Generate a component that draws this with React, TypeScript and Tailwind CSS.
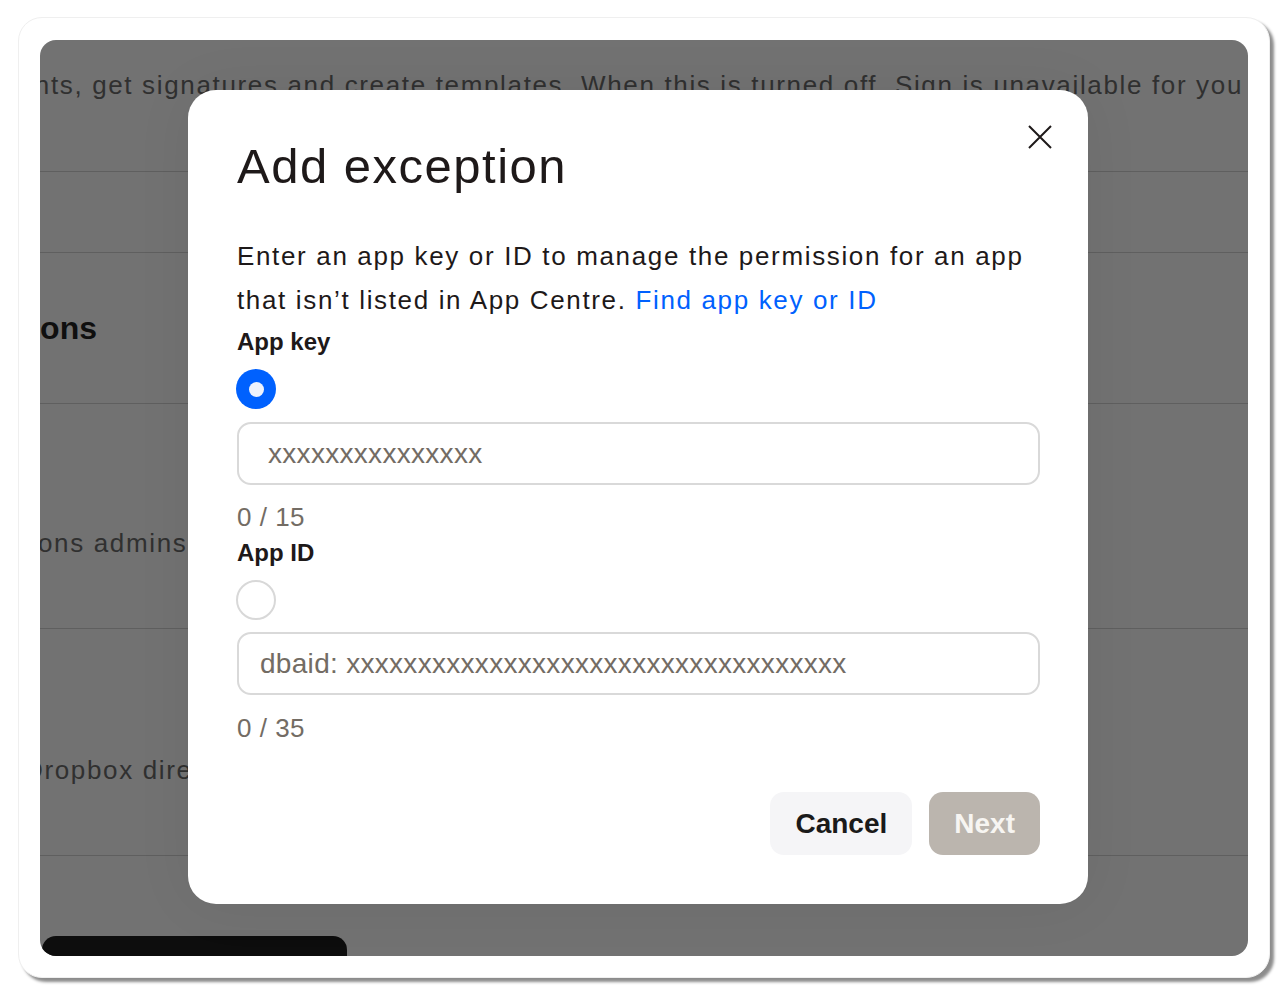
import React from 'react';

const Radio: React.FC<{ checked?: boolean }> = ({ checked }) =>
  checked ? (
    <div className="-ml-[1px] w-10 h-10 rounded-full bg-[#0061fe] flex items-center justify-center">
      <div className="w-[15px] h-[15px] rounded-full bg-[#eef3fd]"></div>
    </div>
  ) : (
    <div className="-ml-[1px] w-10 h-10 rounded-full border-2 border-[#d8d8d8] bg-white"></div>
  );

const Field: React.FC<{ placeholder: string; pad: string }> = ({ placeholder, pad }) => (
  <div className="h-[63px] rounded-[14px] border-2 border-[#d9d9d9] flex items-center">
    <input
      readOnly
      placeholder={placeholder}
      className={`w-full h-full bg-transparent outline-none text-[28px] tracking-[0.3px] text-[#1e1919] placeholder:text-[#736c64] ${pad}`}
    />
  </div>
);

export default function App() {
  return (
    <div className="w-[1288px] h-[996px] bg-white pl-[18px] pt-[17px] font-['Liberation_Sans',Arial,sans-serif]">
      <div className="w-[1252px] h-[961px] rounded-[24px] bg-white border border-[#efefef] shadow-[4px_4px_3px_rgba(0,0,0,0.45)] px-[21px] pt-[22px] pb-[21px]">
        <div className="relative h-full rounded-[16px] bg-[#727272] overflow-hidden flex flex-col">
          {/* page behind the dialog */}
          <div className="h-[33px] shrink-0"></div>
          <div className="h-[99px] shrink-0 border-b border-[#5f5f5f] flex justify-end pr-[5px]">
            <span className="shrink-0 whitespace-nowrap text-[26px] leading-[24px] tracking-[1.65px] text-[#303030]">
              Create documents, get signatures and create templates. When this is turned off, Sign is unavailable for you
            </span>
          </div>
          <div className="h-[81px] shrink-0 border-b border-[#5f5f5f]"></div>
          <div className="h-[151px] shrink-0 border-b border-[#5f5f5f] pt-[55px] flex">
            <div className="w-[57px] shrink-0 flex justify-end">
              <span className="shrink-0 whitespace-nowrap text-[32px] leading-[40px] font-bold text-[#0f0f0f]">Permissions</span>
            </div>
          </div>
          <div className="h-[225px] shrink-0 border-b border-[#5f5f5f] pt-[124px]">
            <p className="-ml-[2px] whitespace-nowrap text-[26px] leading-[30px] tracking-[1.65px] text-[#303030]">
              ons admins can manage which apps are allowed
            </p>
          </div>
          <div className="h-[227px] shrink-0 border-b border-[#5f5f5f] pt-[126px]">
            <p className="-ml-[16px] whitespace-nowrap text-[26px] leading-[30px] tracking-[1.65px] text-[#303030]">
              Dropbox directory
            </p>
          </div>
          <div className="flex-1 flex items-end pl-[2px]">
            <div className="w-[305px] h-[20px] rounded-t-[14px] bg-[#0d0d0d]"></div>
          </div>

          {/* dialog */}
          <div className="absolute left-[148px] top-[50px] w-[900px] h-[814px] rounded-[28px] bg-white shadow-[0_0_60px_rgba(0,0,0,0.06)] pl-[49px] pr-[48px] pt-[46px] flex flex-col text-[#1e1919]">
            <button className="absolute top-[35px] right-[36px] w-6 h-6">
              <svg width="24" height="24" viewBox="0 0 24 24" fill="none">
                <path d="M1 1L23 23M23 1L1 23" stroke="#1e1919" strokeWidth="2" />
              </svg>
            </button>

            <h2 className="text-[49px] leading-[60px] tracking-[1.5px]">Add exception</h2>

            <p className="mt-[38px] text-[26px] leading-[44px] tracking-[1.65px]">
              Enter an app key or ID to manage the permission for an app that isn’t listed in App Centre.{' '}
              <a className="text-[#0061fe]">Find app key or ID</a>
            </p>

            <div className="text-[24px] leading-[40px] font-bold">App key</div>
            <div className="mt-[7px]">
              <Radio checked />
            </div>
            <div className="mt-[13px]">
              <Field placeholder="xxxxxxxxxxxxxxx" pad="pl-[29px]" />
            </div>
            <div className="mt-[16px] text-[26px] leading-[32px] tracking-[0.5px] text-[#736c64]">0 / 15</div>

            <div className="text-[24px] leading-[40px] font-bold">App ID</div>
            <div className="mt-[7px]">
              <Radio />
            </div>
            <div className="mt-[12px]">
              <Field placeholder="dbaid: xxxxxxxxxxxxxxxxxxxxxxxxxxxxxxxxxxx" pad="pl-[21px]" />
            </div>
            <div className="mt-[17px] text-[26px] leading-[32px] tracking-[0.5px] text-[#736c64]">0 / 35</div>

            <div className="mt-[48px] flex justify-end gap-[17px]">
              <button className="h-[63px] px-[25px] rounded-[14px] bg-[#f5f5f7] text-[28px] font-bold text-[#1a1a1a]">Cancel</button>
              <button className="h-[63px] px-[25px] rounded-[14px] bg-[#bbb5ae] text-[28px] font-bold text-[#f7f5f2]">Next</button>
            </div>
          </div>
        </div>
      </div>
    </div>
  );
}
